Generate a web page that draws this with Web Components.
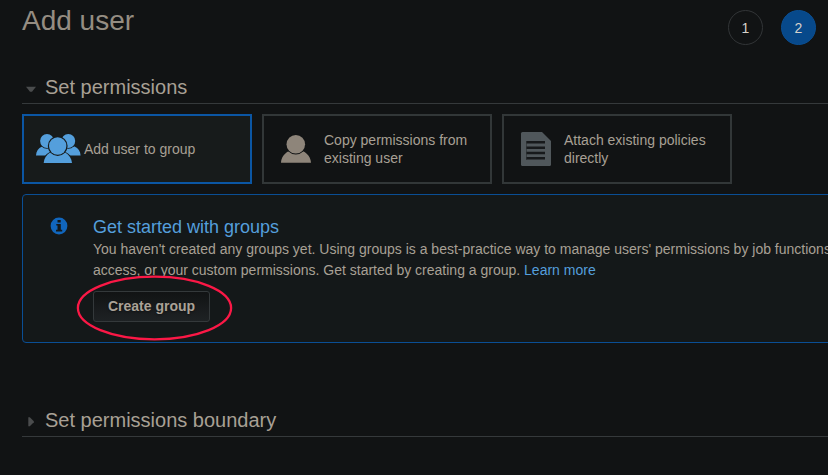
<!DOCTYPE html>
<html lang="en">
<head>
<meta charset="utf-8">
<title>Add user</title>
<style>
html,body{margin:0;background:#111314;overflow:hidden;height:475px}
body{font:14px/18px "Liberation Sans",Arial,sans-serif;color:#a8a095}
</style>
</head>
<body>
<add-user-page></add-user-page>
<script>
function define(name, html) {
  const t = document.createElement('template');
  t.innerHTML = html;
  customElements.define(name, class extends HTMLElement {
    constructor() {
      super();
      this.attachShadow({mode: 'open'}).appendChild(t.content.cloneNode(true));
    }
  });
}

define('step-dot', `<style>
:host{display:grid;place-items:center;box-sizing:border-box;width:35px;height:35px;border:1px solid #323537;border-radius:50%;color:#d6d2cb;padding-top:1px}
:host([active]){background:#07498b;border-color:#0a4f94}
</style><slot></slot>`);

define('section-header', `<style>
:host{display:flex;align-items:center;box-sizing:border-box;height:34px;border-bottom:1px solid #35393b;font-size:20px;line-height:31px}
.a{width:23px;height:33px;flex:none}
.right{display:none}
:host([collapsed]) .right{display:inline}
:host([collapsed]) .down{display:none}
h2{margin:0;padding-top:2px;font:inherit}
</style><svg class="a" viewBox="0 0 23 33"><path class="down" fill="#4a4c4d" d="M4 16.800h10l-4 5H8z"/><path class="right" fill="#4a4c4d" d="M6.300 14.200h1.500l4 4v1l-4 4H6.300z"/></svg><h2><slot></slot></h2>`);

define('option-card', `<style>
:host{display:flex;align-items:center;box-sizing:border-box;width:230px;height:70px;border:2px solid #323738;padding-right:12px}
:host([selected]){background:#171b1b;border-color:#0b56a4}
.i{width:60px;height:66px;flex:none}
</style><div class="i"><slot name="icon"></slot></div><div><slot></slot></div>`);

define('users-icon', `<style>:host,svg{display:block}</style>
<svg width="60" height="66" viewBox="24 116 60 66" fill="#549fdc">
<path d="M36 155.500c.2-4.200 2.300-7.300 6-9h11v9zM80.600 155.500c-.2-4.200-2.300-7.300-6-9h-11v9z"/>
<g fill="#171b1b"><circle cx="47" cy="141" r="7.700"/><circle cx="68.300" cy="141" r="7.700"/></g>
<circle cx="47" cy="141" r="6.900"/><circle cx="68.300" cy="141" r="6.900"/>
<path d="M43.700 163c.3-4.700 2.600-8 6.600-10 4.300 3.500 10.400 3.500 14.700 0 4 2 6.600 5.300 7 10z" fill="#171b1b" stroke="#171b1b" stroke-width="2.400"/>
<path d="M43.700 163c.3-4.700 2.600-8 6.400-10.500h15.200c3.800 2.500 6.300 5.800 6.700 10.500z"/>
<circle cx="57.700" cy="146" r="9.900" fill="#171b1b"/><circle cx="57.700" cy="146" r="8.700"/>
</svg>`);

define('user-icon', `<style>:host,svg{display:block}</style>
<svg width="60" height="66" viewBox="264 116 60 66" fill="#8e857a">
<path d="M281 162.700c.3-5 3.400-9.400 7.600-11.400 4.300 3 10.100 3 14.400 0 4.600 2 7.700 6.400 8 11.400z"/>
<circle cx="295.800" cy="144.300" r="10.300" fill="#111314"/><circle cx="295.800" cy="144.300" r="9.300"/>
</svg>`);

define('policy-icon', `<style>:host,svg{display:block}</style>
<svg width="60" height="66" viewBox="504 116 60 66">
<path fill="#50575b" d="M522.500 132H542l9 9v23.500q0 1.500-1.500 1.500h-27q-1.500 0-1.500-1.500v-31q0-1.500 1.500-1.500z"/>
<path stroke="#393e41" stroke-width="1" d="M526.500 141v19"/>
<path stroke="#17191b" stroke-width="2.600" d="M526.500 142.300H545M526.500 147.700H545M526.500 153H545M526.500 158.300H545"/>
</svg>`);

define('aws-button', `<style>
:host{display:block}
button{display:block;box-sizing:border-box;width:117px;height:31px;border:1px solid #34393b;border-radius:3px;background:linear-gradient(#111314,#1e2224);font:bold 14px/29px "Liberation Sans",Arial,sans-serif;color:#aaa297;padding:0;text-shadow:0 1px 2px #0006}
</style><button><slot></slot></button>`);

define('info-panel', `<style>
:host{display:flex;position:relative;box-sizing:border-box;width:900px;height:149px;border:1px solid #0a4e94;border-radius:4px;background:#141819;padding-top:22px}
.i{width:70px;height:22px;flex:none}
h3{margin:0;font:18px/20px "Liberation Sans",Arial,sans-serif;color:#549fdc}
p{margin:2px 0 10px;line-height:21px;white-space:nowrap}
.ring{position:absolute;left:53px;top:80px;pointer-events:none}
</style>
<svg class="i" viewBox="23 217 70 22"><circle cx="59" cy="226" r="8.400" fill="#1166bd"/><path fill="#141819" d="M57.500 219.900h3.200v2.500h-3.200zM56.300 223.900h4.500v5.900h1.400v1.700h-6.200v-1.700h1.500v-4.200h-1.200z"/></svg>
<div><h3><slot name="title"></slot></h3><p><slot></slot></p><slot name="action"></slot></div>
<svg class="ring" width="158" height="67" viewBox="76 275 158 67"><ellipse cx="154.500" cy="308" rx="76.600" ry="31.300" fill="none" stroke="#fb1846" stroke-width="2.300"/></svg>`);

define('add-user-page', `<style>
:host{display:block;width:828px;height:475px;overflow:hidden}
header{display:flex;justify-content:space-between;height:70px;padding:0 12px 0 22px}
h1{margin:0;font:28px/42px "Liberation Sans",Arial,sans-serif;color:#958d82}
nav{display:flex;gap:18px;padding-top:10px}
main{padding-left:22px}
.cards{display:flex;gap:10px;padding:10px 0}
.boundary{margin-top:60px}
a{color:#549fdc;text-decoration:none}
</style>
<header><h1>Add user</h1><nav><step-dot>1</step-dot><step-dot active>2</step-dot></nav></header>
<main>
<section-header>Set permissions</section-header>
<div class="cards">
<option-card selected><users-icon slot="icon"></users-icon>Add user to group</option-card>
<option-card><user-icon slot="icon"></user-icon>Copy permissions from<br>existing user</option-card>
<option-card><policy-icon slot="icon"></policy-icon>Attach existing policies<br>directly</option-card>
</div>
<info-panel><span slot="title">Get started with groups</span>You haven't created any groups yet. Using groups is a best-practice way to manage users' permissions by job functions<br>access, or your custom permissions. Get started by creating a group. <a>Learn more</a><aws-button slot="action">Create group</aws-button></info-panel>
<section-header class="boundary" collapsed>Set permissions boundary</section-header>
</main>`);
</script>
</body>
</html>
